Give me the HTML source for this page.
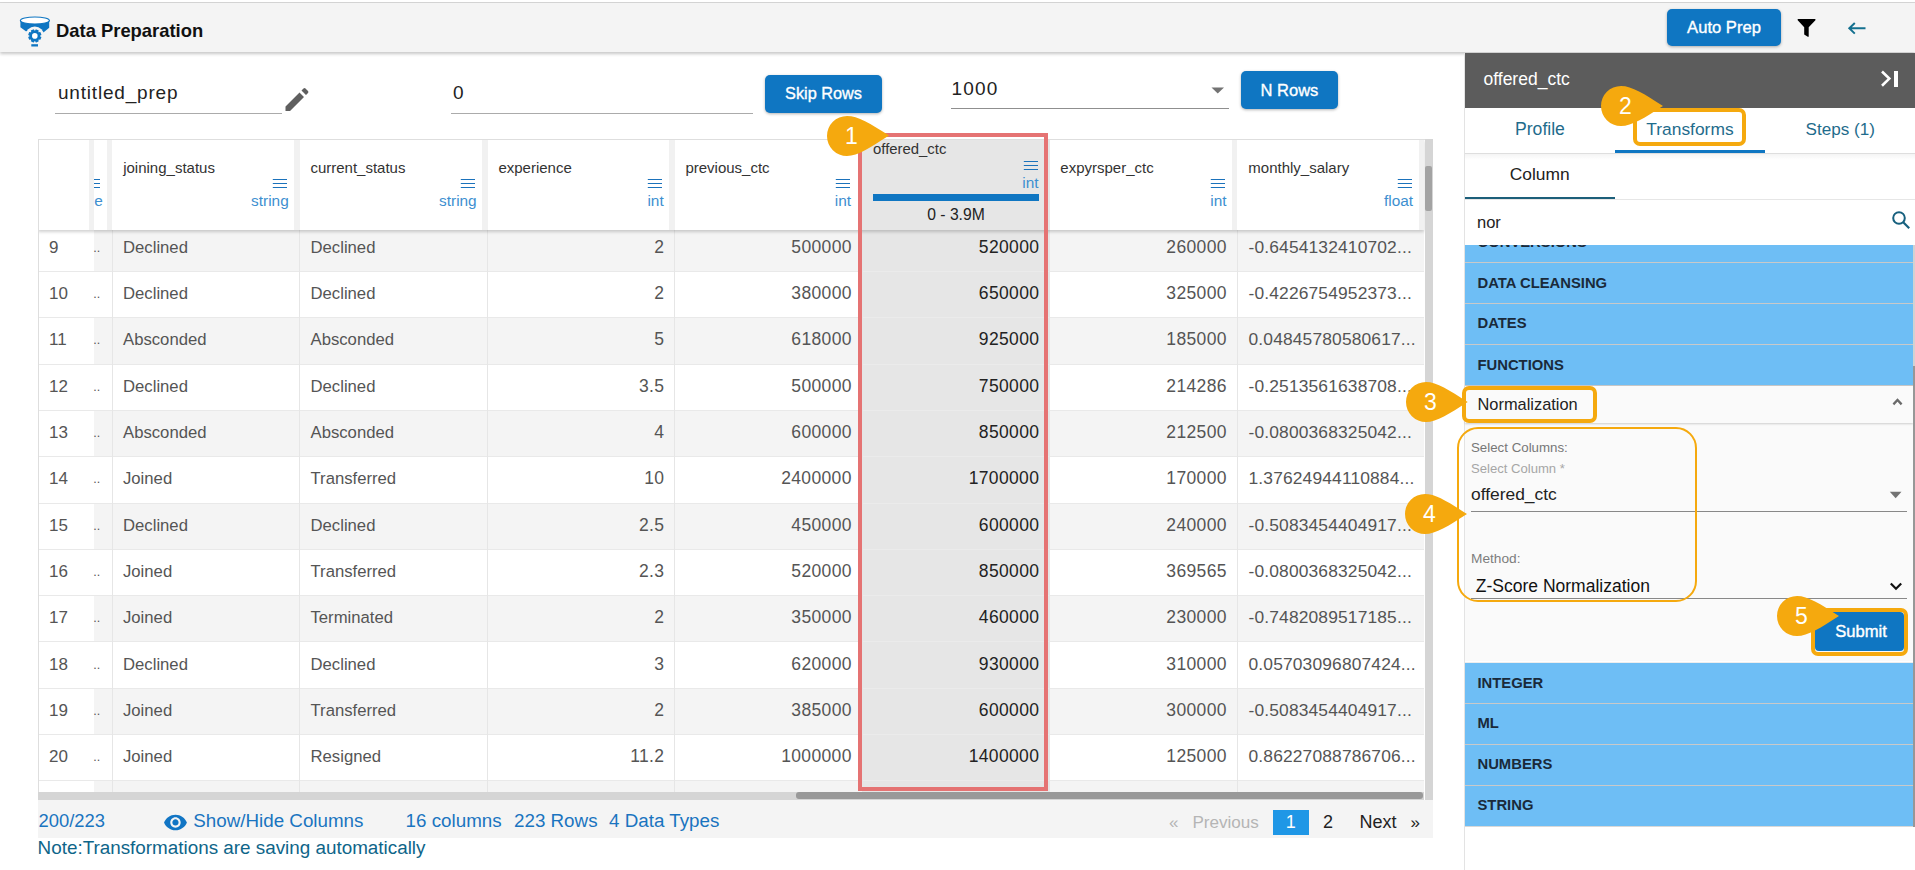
<!DOCTYPE html>
<html><head><meta charset="utf-8"><style>
html,body{margin:0;padding:0;background:#fff;width:1915px;height:870px;overflow:hidden;position:relative;font-family:"Liberation Sans", sans-serif;}
</style></head><body>
<div style="position:absolute;left:0.00px;top:0.00px;width:1915.00px;height:2.00px;background:#fff"></div><div style="position:absolute;left:0.00px;top:2.00px;width:1915.00px;height:1.00px;background:#d6d6d6"></div><div style="position:absolute;left:0.00px;top:3.00px;width:1915.00px;height:49.00px;background:#f4f4f4;box-shadow:0 2px 3px rgba(0,0,0,0.22)"></div><svg style="position:absolute;left:0.00px;top:0.00px" width="60" height="52" viewBox="0 0 60 52">
<path d="M20.4 20.5 V27.2 L25.8 31.2 L43.4 32.6 L49.2 27.8 V20.5 Z" fill="#0f76c2"/>
<circle cx="34.8" cy="35.9" r="9.4" fill="#f4f4f4"/>
<ellipse cx="34.9" cy="20.5" rx="14.5" ry="3.5" fill="#fff" stroke="#0f76c2" stroke-width="1.2"/>
<g transform="translate(34.8,35.9) rotate(22.5)" fill="#0f76c2">
<circle r="5.3"/>
<rect x="-1.7" y="-6.6" width="3.4" height="13.2" rx="0.6"/>
<rect x="-1.7" y="-6.6" width="3.4" height="13.2" rx="0.6" transform="rotate(45)"/>
<rect x="-1.7" y="-6.6" width="3.4" height="13.2" rx="0.6" transform="rotate(90)"/>
<rect x="-1.7" y="-6.6" width="3.4" height="13.2" rx="0.6" transform="rotate(135)"/>
</g>
<circle cx="34.8" cy="35.9" r="2.8" fill="#fff"/>
<rect x="31.3" y="44.2" width="6.7" height="2.3" fill="#0f76c2"/>
</svg><div style="position:absolute;left:56.00px;top:22.00px;font-size:18.4px;line-height:1;color:#111;font-weight:700;white-space:nowrap;">Data Preparation</div><div style="position:absolute;left:1667.00px;top:9.00px;width:114.00px;height:37.00px;background:#0f76c2;border-radius:5px;box-shadow:0 1px 3px rgba(0,0,0,0.3)"></div><div style="position:absolute;left:1524.00px;width:400px;text-align:center;top:20.00px;font-size:16.6px;line-height:1;color:#fff;font-weight:400;white-space:nowrap;-webkit-text-stroke:0.35px #fff">Auto Prep</div><svg style="position:absolute;left:1797.00px;top:19.00px" width="20" height="19" viewBox="0 0 20 19"><path d="M0.7 0.1 H18.4 V1.3 L11.7 8.3 V17.8 H10.8 L7.2 15.6 V8.3 L0.7 1.3 Z" fill="#000"/></svg><svg style="position:absolute;left:1846.00px;top:21.00px" width="22" height="15" viewBox="0 0 22 15"><path d="M19.5 7.3 H3.5 M8.8 2 L3.3 7.3 L8.8 12.6" fill="none" stroke="#14708f" stroke-width="2"/></svg><div style="position:absolute;left:58.00px;top:83.00px;font-size:19px;line-height:1;color:#222;font-weight:400;white-space:nowrap;letter-spacing:0.8px">untitled_prep</div><div style="position:absolute;left:55.00px;top:113.00px;width:227.00px;height:1.00px;background:#ababab"></div><svg style="position:absolute;left:284.00px;top:87.00px" width="26" height="26" viewBox="0 0 26 26"><path d="M1.5 24 V19.5 L15.5 5.5 L20 10 L6 24 Z M17.5 3.5 L19.5 1.5 Q20.5 0.6 21.5 1.5 L24 4 Q24.9 5 24 6 L22 8 Z" fill="#5f5f5f"/></svg><div style="position:absolute;left:453.00px;top:83.00px;font-size:19px;line-height:1;color:#222;font-weight:400;white-space:nowrap;">0</div><div style="position:absolute;left:451.00px;top:113.00px;width:302.00px;height:1.00px;background:#ababab"></div><div style="position:absolute;left:765.00px;top:75.00px;width:117.00px;height:38.00px;background:#0f76c2;border-radius:5px;box-shadow:0 1px 3px rgba(0,0,0,0.3)"></div><div style="position:absolute;left:623.50px;width:400px;text-align:center;top:85.00px;font-size:16.3px;line-height:1;color:#fff;font-weight:400;white-space:nowrap;-webkit-text-stroke:0.35px #fff">Skip Rows</div><div style="position:absolute;left:951.50px;top:79.00px;font-size:19px;line-height:1;color:#222;font-weight:400;white-space:nowrap;letter-spacing:1.2px">1000</div><div style="position:absolute;left:951.00px;top:108.00px;width:278.00px;height:1.00px;background:#8f8f8f"></div><svg style="position:absolute;left:1211.00px;top:87.00px" width="14" height="7" viewBox="0 0 14 7"><path d="M0.5 0.5 H13 L6.75 6.5 Z" fill="#737373"/></svg><div style="position:absolute;left:1241.00px;top:71.00px;width:97.00px;height:38.00px;background:#0f76c2;border-radius:5px;box-shadow:0 1px 3px rgba(0,0,0,0.3)"></div><div style="position:absolute;left:1089.50px;width:400px;text-align:center;top:82.00px;font-size:16.5px;line-height:1;color:#fff;font-weight:400;white-space:nowrap;-webkit-text-stroke:0.35px #fff">N Rows</div><div style="position:absolute;left:38px;top:139px;width:1394px;height:653px;overflow:hidden;background:#fff"><div style="position:absolute;left:0.00px;top:86.70px;width:1386.00px;height:46.30px;background:#f4f4f4"></div><div style="position:absolute;left:0.00px;top:86.70px;width:56.00px;height:46.30px;background:#fff"></div><div style="position:absolute;left:0.00px;top:132.00px;width:1386.00px;height:1.00px;background:#e9e9e9"></div><div style="position:absolute;left:0.00px;top:133.00px;width:1386.00px;height:46.30px;background:#fff"></div><div style="position:absolute;left:0.00px;top:133.00px;width:56.00px;height:46.30px;background:#fff"></div><div style="position:absolute;left:0.00px;top:178.30px;width:1386.00px;height:1.00px;background:#e9e9e9"></div><div style="position:absolute;left:0.00px;top:179.30px;width:1386.00px;height:46.30px;background:#f4f4f4"></div><div style="position:absolute;left:0.00px;top:179.30px;width:56.00px;height:46.30px;background:#fff"></div><div style="position:absolute;left:0.00px;top:224.60px;width:1386.00px;height:1.00px;background:#e9e9e9"></div><div style="position:absolute;left:0.00px;top:225.60px;width:1386.00px;height:46.30px;background:#fff"></div><div style="position:absolute;left:0.00px;top:225.60px;width:56.00px;height:46.30px;background:#fff"></div><div style="position:absolute;left:0.00px;top:270.90px;width:1386.00px;height:1.00px;background:#e9e9e9"></div><div style="position:absolute;left:0.00px;top:271.90px;width:1386.00px;height:46.30px;background:#f4f4f4"></div><div style="position:absolute;left:0.00px;top:271.90px;width:56.00px;height:46.30px;background:#fff"></div><div style="position:absolute;left:0.00px;top:317.20px;width:1386.00px;height:1.00px;background:#e9e9e9"></div><div style="position:absolute;left:0.00px;top:318.20px;width:1386.00px;height:46.30px;background:#fff"></div><div style="position:absolute;left:0.00px;top:318.20px;width:56.00px;height:46.30px;background:#fff"></div><div style="position:absolute;left:0.00px;top:363.50px;width:1386.00px;height:1.00px;background:#e9e9e9"></div><div style="position:absolute;left:0.00px;top:364.50px;width:1386.00px;height:46.30px;background:#f4f4f4"></div><div style="position:absolute;left:0.00px;top:364.50px;width:56.00px;height:46.30px;background:#fff"></div><div style="position:absolute;left:0.00px;top:409.80px;width:1386.00px;height:1.00px;background:#e9e9e9"></div><div style="position:absolute;left:0.00px;top:410.80px;width:1386.00px;height:46.30px;background:#fff"></div><div style="position:absolute;left:0.00px;top:410.80px;width:56.00px;height:46.30px;background:#fff"></div><div style="position:absolute;left:0.00px;top:456.10px;width:1386.00px;height:1.00px;background:#e9e9e9"></div><div style="position:absolute;left:0.00px;top:457.10px;width:1386.00px;height:46.30px;background:#f4f4f4"></div><div style="position:absolute;left:0.00px;top:457.10px;width:56.00px;height:46.30px;background:#fff"></div><div style="position:absolute;left:0.00px;top:502.40px;width:1386.00px;height:1.00px;background:#e9e9e9"></div><div style="position:absolute;left:0.00px;top:503.40px;width:1386.00px;height:46.30px;background:#fff"></div><div style="position:absolute;left:0.00px;top:503.40px;width:56.00px;height:46.30px;background:#fff"></div><div style="position:absolute;left:0.00px;top:548.70px;width:1386.00px;height:1.00px;background:#e9e9e9"></div><div style="position:absolute;left:0.00px;top:549.70px;width:1386.00px;height:46.30px;background:#f4f4f4"></div><div style="position:absolute;left:0.00px;top:549.70px;width:56.00px;height:46.30px;background:#fff"></div><div style="position:absolute;left:0.00px;top:595.00px;width:1386.00px;height:1.00px;background:#e9e9e9"></div><div style="position:absolute;left:0.00px;top:596.00px;width:1386.00px;height:46.30px;background:#fff"></div><div style="position:absolute;left:0.00px;top:596.00px;width:56.00px;height:46.30px;background:#fff"></div><div style="position:absolute;left:0.00px;top:641.30px;width:1386.00px;height:1.00px;background:#e9e9e9"></div><div style="position:absolute;left:0.00px;top:642.30px;width:1386.00px;height:46.30px;background:#f4f4f4"></div><div style="position:absolute;left:0.00px;top:642.30px;width:56.00px;height:46.30px;background:#fff"></div><div style="position:absolute;left:0.00px;top:687.60px;width:1386.00px;height:1.00px;background:#e9e9e9"></div><div style="position:absolute;left:824.00px;top:0.00px;width:187.50px;height:653.00px;background:#e6e6e6"></div><div style="position:absolute;left:824.00px;top:132.00px;width:187.50px;height:1.00px;background:#ebebeb"></div><div style="position:absolute;left:824.00px;top:178.30px;width:187.50px;height:1.00px;background:#ebebeb"></div><div style="position:absolute;left:824.00px;top:224.60px;width:187.50px;height:1.00px;background:#ebebeb"></div><div style="position:absolute;left:824.00px;top:270.90px;width:187.50px;height:1.00px;background:#ebebeb"></div><div style="position:absolute;left:824.00px;top:317.20px;width:187.50px;height:1.00px;background:#ebebeb"></div><div style="position:absolute;left:824.00px;top:363.50px;width:187.50px;height:1.00px;background:#ebebeb"></div><div style="position:absolute;left:824.00px;top:409.80px;width:187.50px;height:1.00px;background:#ebebeb"></div><div style="position:absolute;left:824.00px;top:456.10px;width:187.50px;height:1.00px;background:#ebebeb"></div><div style="position:absolute;left:824.00px;top:502.40px;width:187.50px;height:1.00px;background:#ebebeb"></div><div style="position:absolute;left:824.00px;top:548.70px;width:187.50px;height:1.00px;background:#ebebeb"></div><div style="position:absolute;left:824.00px;top:595.00px;width:187.50px;height:1.00px;background:#ebebeb"></div><div style="position:absolute;left:824.00px;top:641.30px;width:187.50px;height:1.00px;background:#ebebeb"></div><div style="position:absolute;left:824.00px;top:687.60px;width:187.50px;height:1.00px;background:#ebebeb"></div><div style="position:absolute;left:73.90px;top:91.00px;width:1.00px;height:562.00px;background:#e6e6e6"></div><div style="position:absolute;left:261.10px;top:91.00px;width:1.00px;height:562.00px;background:#e6e6e6"></div><div style="position:absolute;left:449.10px;top:91.00px;width:1.00px;height:562.00px;background:#e6e6e6"></div><div style="position:absolute;left:636.10px;top:91.00px;width:1.00px;height:562.00px;background:#e6e6e6"></div><div style="position:absolute;left:823.50px;top:91.00px;width:1.00px;height:562.00px;background:#e6e6e6"></div><div style="position:absolute;left:1011.00px;top:91.00px;width:1.00px;height:562.00px;background:#e6e6e6"></div><div style="position:absolute;left:1199.00px;top:91.00px;width:1.00px;height:562.00px;background:#e6e6e6"></div><div style="position:absolute;left:11.00px;top:100.00px;font-size:17px;line-height:1;color:#555;font-weight:400;white-space:nowrap;">9</div><div style="position:absolute;left:55.20px;top:103.00px;font-size:12.5px;line-height:1;color:#555;font-weight:400;white-space:nowrap;">..</div><div style="position:absolute;left:85.00px;top:101.00px;font-size:16.7px;line-height:1;color:#555;font-weight:400;white-space:nowrap;">Declined</div><div style="position:absolute;left:272.50px;top:101.00px;font-size:16.7px;line-height:1;color:#555;font-weight:400;white-space:nowrap;">Declined</div><div style="position:absolute;left:226.30px;width:400px;text-align:right;top:100.00px;font-size:17.5px;line-height:1;color:#555;font-weight:400;white-space:nowrap;letter-spacing:0.35px">2</div><div style="position:absolute;left:413.80px;width:400px;text-align:right;top:100.00px;font-size:17.5px;line-height:1;color:#555;font-weight:400;white-space:nowrap;letter-spacing:0.35px">500000</div><div style="position:absolute;left:601.30px;width:400px;text-align:right;top:100.00px;font-size:17.5px;line-height:1;color:#222;font-weight:400;white-space:nowrap;letter-spacing:0.35px">520000</div><div style="position:absolute;left:788.80px;width:400px;text-align:right;top:100.00px;font-size:17.5px;line-height:1;color:#555;font-weight:400;white-space:nowrap;letter-spacing:0.35px">260000</div><div style="position:absolute;left:1210.50px;top:100.00px;font-size:17.4px;line-height:1;color:#555;font-weight:400;white-space:nowrap;letter-spacing:0.15px">-0.6454132410702...</div><div style="position:absolute;left:11.00px;top:146.00px;font-size:17px;line-height:1;color:#555;font-weight:400;white-space:nowrap;">10</div><div style="position:absolute;left:55.20px;top:149.00px;font-size:12.5px;line-height:1;color:#555;font-weight:400;white-space:nowrap;">..</div><div style="position:absolute;left:85.00px;top:147.00px;font-size:16.7px;line-height:1;color:#555;font-weight:400;white-space:nowrap;">Declined</div><div style="position:absolute;left:272.50px;top:147.00px;font-size:16.7px;line-height:1;color:#555;font-weight:400;white-space:nowrap;">Declined</div><div style="position:absolute;left:226.30px;width:400px;text-align:right;top:146.00px;font-size:17.5px;line-height:1;color:#555;font-weight:400;white-space:nowrap;letter-spacing:0.35px">2</div><div style="position:absolute;left:413.80px;width:400px;text-align:right;top:146.00px;font-size:17.5px;line-height:1;color:#555;font-weight:400;white-space:nowrap;letter-spacing:0.35px">380000</div><div style="position:absolute;left:601.30px;width:400px;text-align:right;top:146.00px;font-size:17.5px;line-height:1;color:#222;font-weight:400;white-space:nowrap;letter-spacing:0.35px">650000</div><div style="position:absolute;left:788.80px;width:400px;text-align:right;top:146.00px;font-size:17.5px;line-height:1;color:#555;font-weight:400;white-space:nowrap;letter-spacing:0.35px">325000</div><div style="position:absolute;left:1210.50px;top:146.00px;font-size:17.4px;line-height:1;color:#555;font-weight:400;white-space:nowrap;letter-spacing:0.15px">-0.4226754952373...</div><div style="position:absolute;left:11.00px;top:192.00px;font-size:17px;line-height:1;color:#555;font-weight:400;white-space:nowrap;">11</div><div style="position:absolute;left:55.20px;top:195.00px;font-size:12.5px;line-height:1;color:#555;font-weight:400;white-space:nowrap;">..</div><div style="position:absolute;left:85.00px;top:193.00px;font-size:16.7px;line-height:1;color:#555;font-weight:400;white-space:nowrap;">Absconded</div><div style="position:absolute;left:272.50px;top:193.00px;font-size:16.7px;line-height:1;color:#555;font-weight:400;white-space:nowrap;">Absconded</div><div style="position:absolute;left:226.30px;width:400px;text-align:right;top:192.00px;font-size:17.5px;line-height:1;color:#555;font-weight:400;white-space:nowrap;letter-spacing:0.35px">5</div><div style="position:absolute;left:413.80px;width:400px;text-align:right;top:192.00px;font-size:17.5px;line-height:1;color:#555;font-weight:400;white-space:nowrap;letter-spacing:0.35px">618000</div><div style="position:absolute;left:601.30px;width:400px;text-align:right;top:192.00px;font-size:17.5px;line-height:1;color:#222;font-weight:400;white-space:nowrap;letter-spacing:0.35px">925000</div><div style="position:absolute;left:788.80px;width:400px;text-align:right;top:192.00px;font-size:17.5px;line-height:1;color:#555;font-weight:400;white-space:nowrap;letter-spacing:0.35px">185000</div><div style="position:absolute;left:1210.50px;top:192.00px;font-size:17.4px;line-height:1;color:#555;font-weight:400;white-space:nowrap;letter-spacing:0.15px">0.04845780580617...</div><div style="position:absolute;left:11.00px;top:239.00px;font-size:17px;line-height:1;color:#555;font-weight:400;white-space:nowrap;">12</div><div style="position:absolute;left:55.20px;top:242.00px;font-size:12.5px;line-height:1;color:#555;font-weight:400;white-space:nowrap;">..</div><div style="position:absolute;left:85.00px;top:240.00px;font-size:16.7px;line-height:1;color:#555;font-weight:400;white-space:nowrap;">Declined</div><div style="position:absolute;left:272.50px;top:240.00px;font-size:16.7px;line-height:1;color:#555;font-weight:400;white-space:nowrap;">Declined</div><div style="position:absolute;left:226.30px;width:400px;text-align:right;top:239.00px;font-size:17.5px;line-height:1;color:#555;font-weight:400;white-space:nowrap;letter-spacing:0.35px">3.5</div><div style="position:absolute;left:413.80px;width:400px;text-align:right;top:239.00px;font-size:17.5px;line-height:1;color:#555;font-weight:400;white-space:nowrap;letter-spacing:0.35px">500000</div><div style="position:absolute;left:601.30px;width:400px;text-align:right;top:239.00px;font-size:17.5px;line-height:1;color:#222;font-weight:400;white-space:nowrap;letter-spacing:0.35px">750000</div><div style="position:absolute;left:788.80px;width:400px;text-align:right;top:239.00px;font-size:17.5px;line-height:1;color:#555;font-weight:400;white-space:nowrap;letter-spacing:0.35px">214286</div><div style="position:absolute;left:1210.50px;top:239.00px;font-size:17.4px;line-height:1;color:#555;font-weight:400;white-space:nowrap;letter-spacing:0.15px">-0.2513561638708...</div><div style="position:absolute;left:11.00px;top:285.00px;font-size:17px;line-height:1;color:#555;font-weight:400;white-space:nowrap;">13</div><div style="position:absolute;left:55.20px;top:288.00px;font-size:12.5px;line-height:1;color:#555;font-weight:400;white-space:nowrap;">..</div><div style="position:absolute;left:85.00px;top:286.00px;font-size:16.7px;line-height:1;color:#555;font-weight:400;white-space:nowrap;">Absconded</div><div style="position:absolute;left:272.50px;top:286.00px;font-size:16.7px;line-height:1;color:#555;font-weight:400;white-space:nowrap;">Absconded</div><div style="position:absolute;left:226.30px;width:400px;text-align:right;top:285.00px;font-size:17.5px;line-height:1;color:#555;font-weight:400;white-space:nowrap;letter-spacing:0.35px">4</div><div style="position:absolute;left:413.80px;width:400px;text-align:right;top:285.00px;font-size:17.5px;line-height:1;color:#555;font-weight:400;white-space:nowrap;letter-spacing:0.35px">600000</div><div style="position:absolute;left:601.30px;width:400px;text-align:right;top:285.00px;font-size:17.5px;line-height:1;color:#222;font-weight:400;white-space:nowrap;letter-spacing:0.35px">850000</div><div style="position:absolute;left:788.80px;width:400px;text-align:right;top:285.00px;font-size:17.5px;line-height:1;color:#555;font-weight:400;white-space:nowrap;letter-spacing:0.35px">212500</div><div style="position:absolute;left:1210.50px;top:285.00px;font-size:17.4px;line-height:1;color:#555;font-weight:400;white-space:nowrap;letter-spacing:0.15px">-0.0800368325042...</div><div style="position:absolute;left:11.00px;top:331.00px;font-size:17px;line-height:1;color:#555;font-weight:400;white-space:nowrap;">14</div><div style="position:absolute;left:55.20px;top:334.00px;font-size:12.5px;line-height:1;color:#555;font-weight:400;white-space:nowrap;">..</div><div style="position:absolute;left:85.00px;top:332.00px;font-size:16.7px;line-height:1;color:#555;font-weight:400;white-space:nowrap;">Joined</div><div style="position:absolute;left:272.50px;top:332.00px;font-size:16.7px;line-height:1;color:#555;font-weight:400;white-space:nowrap;">Transferred</div><div style="position:absolute;left:226.30px;width:400px;text-align:right;top:331.00px;font-size:17.5px;line-height:1;color:#555;font-weight:400;white-space:nowrap;letter-spacing:0.35px">10</div><div style="position:absolute;left:413.80px;width:400px;text-align:right;top:331.00px;font-size:17.5px;line-height:1;color:#555;font-weight:400;white-space:nowrap;letter-spacing:0.35px">2400000</div><div style="position:absolute;left:601.30px;width:400px;text-align:right;top:331.00px;font-size:17.5px;line-height:1;color:#222;font-weight:400;white-space:nowrap;letter-spacing:0.35px">1700000</div><div style="position:absolute;left:788.80px;width:400px;text-align:right;top:331.00px;font-size:17.5px;line-height:1;color:#555;font-weight:400;white-space:nowrap;letter-spacing:0.35px">170000</div><div style="position:absolute;left:1210.50px;top:331.00px;font-size:17.4px;line-height:1;color:#555;font-weight:400;white-space:nowrap;letter-spacing:0.15px">1.37624944110884...</div><div style="position:absolute;left:11.00px;top:378.00px;font-size:17px;line-height:1;color:#555;font-weight:400;white-space:nowrap;">15</div><div style="position:absolute;left:55.20px;top:381.00px;font-size:12.5px;line-height:1;color:#555;font-weight:400;white-space:nowrap;">..</div><div style="position:absolute;left:85.00px;top:379.00px;font-size:16.7px;line-height:1;color:#555;font-weight:400;white-space:nowrap;">Declined</div><div style="position:absolute;left:272.50px;top:379.00px;font-size:16.7px;line-height:1;color:#555;font-weight:400;white-space:nowrap;">Declined</div><div style="position:absolute;left:226.30px;width:400px;text-align:right;top:378.00px;font-size:17.5px;line-height:1;color:#555;font-weight:400;white-space:nowrap;letter-spacing:0.35px">2.5</div><div style="position:absolute;left:413.80px;width:400px;text-align:right;top:378.00px;font-size:17.5px;line-height:1;color:#555;font-weight:400;white-space:nowrap;letter-spacing:0.35px">450000</div><div style="position:absolute;left:601.30px;width:400px;text-align:right;top:378.00px;font-size:17.5px;line-height:1;color:#222;font-weight:400;white-space:nowrap;letter-spacing:0.35px">600000</div><div style="position:absolute;left:788.80px;width:400px;text-align:right;top:378.00px;font-size:17.5px;line-height:1;color:#555;font-weight:400;white-space:nowrap;letter-spacing:0.35px">240000</div><div style="position:absolute;left:1210.50px;top:378.00px;font-size:17.4px;line-height:1;color:#555;font-weight:400;white-space:nowrap;letter-spacing:0.15px">-0.5083454404917...</div><div style="position:absolute;left:11.00px;top:424.00px;font-size:17px;line-height:1;color:#555;font-weight:400;white-space:nowrap;">16</div><div style="position:absolute;left:55.20px;top:427.00px;font-size:12.5px;line-height:1;color:#555;font-weight:400;white-space:nowrap;">..</div><div style="position:absolute;left:85.00px;top:425.00px;font-size:16.7px;line-height:1;color:#555;font-weight:400;white-space:nowrap;">Joined</div><div style="position:absolute;left:272.50px;top:425.00px;font-size:16.7px;line-height:1;color:#555;font-weight:400;white-space:nowrap;">Transferred</div><div style="position:absolute;left:226.30px;width:400px;text-align:right;top:424.00px;font-size:17.5px;line-height:1;color:#555;font-weight:400;white-space:nowrap;letter-spacing:0.35px">2.3</div><div style="position:absolute;left:413.80px;width:400px;text-align:right;top:424.00px;font-size:17.5px;line-height:1;color:#555;font-weight:400;white-space:nowrap;letter-spacing:0.35px">520000</div><div style="position:absolute;left:601.30px;width:400px;text-align:right;top:424.00px;font-size:17.5px;line-height:1;color:#222;font-weight:400;white-space:nowrap;letter-spacing:0.35px">850000</div><div style="position:absolute;left:788.80px;width:400px;text-align:right;top:424.00px;font-size:17.5px;line-height:1;color:#555;font-weight:400;white-space:nowrap;letter-spacing:0.35px">369565</div><div style="position:absolute;left:1210.50px;top:424.00px;font-size:17.4px;line-height:1;color:#555;font-weight:400;white-space:nowrap;letter-spacing:0.15px">-0.0800368325042...</div><div style="position:absolute;left:11.00px;top:470.00px;font-size:17px;line-height:1;color:#555;font-weight:400;white-space:nowrap;">17</div><div style="position:absolute;left:55.20px;top:473.00px;font-size:12.5px;line-height:1;color:#555;font-weight:400;white-space:nowrap;">..</div><div style="position:absolute;left:85.00px;top:471.00px;font-size:16.7px;line-height:1;color:#555;font-weight:400;white-space:nowrap;">Joined</div><div style="position:absolute;left:272.50px;top:471.00px;font-size:16.7px;line-height:1;color:#555;font-weight:400;white-space:nowrap;">Terminated</div><div style="position:absolute;left:226.30px;width:400px;text-align:right;top:470.00px;font-size:17.5px;line-height:1;color:#555;font-weight:400;white-space:nowrap;letter-spacing:0.35px">2</div><div style="position:absolute;left:413.80px;width:400px;text-align:right;top:470.00px;font-size:17.5px;line-height:1;color:#555;font-weight:400;white-space:nowrap;letter-spacing:0.35px">350000</div><div style="position:absolute;left:601.30px;width:400px;text-align:right;top:470.00px;font-size:17.5px;line-height:1;color:#222;font-weight:400;white-space:nowrap;letter-spacing:0.35px">460000</div><div style="position:absolute;left:788.80px;width:400px;text-align:right;top:470.00px;font-size:17.5px;line-height:1;color:#555;font-weight:400;white-space:nowrap;letter-spacing:0.35px">230000</div><div style="position:absolute;left:1210.50px;top:470.00px;font-size:17.4px;line-height:1;color:#555;font-weight:400;white-space:nowrap;letter-spacing:0.15px">-0.7482089517185...</div><div style="position:absolute;left:11.00px;top:517.00px;font-size:17px;line-height:1;color:#555;font-weight:400;white-space:nowrap;">18</div><div style="position:absolute;left:55.20px;top:520.00px;font-size:12.5px;line-height:1;color:#555;font-weight:400;white-space:nowrap;">..</div><div style="position:absolute;left:85.00px;top:518.00px;font-size:16.7px;line-height:1;color:#555;font-weight:400;white-space:nowrap;">Declined</div><div style="position:absolute;left:272.50px;top:518.00px;font-size:16.7px;line-height:1;color:#555;font-weight:400;white-space:nowrap;">Declined</div><div style="position:absolute;left:226.30px;width:400px;text-align:right;top:517.00px;font-size:17.5px;line-height:1;color:#555;font-weight:400;white-space:nowrap;letter-spacing:0.35px">3</div><div style="position:absolute;left:413.80px;width:400px;text-align:right;top:517.00px;font-size:17.5px;line-height:1;color:#555;font-weight:400;white-space:nowrap;letter-spacing:0.35px">620000</div><div style="position:absolute;left:601.30px;width:400px;text-align:right;top:517.00px;font-size:17.5px;line-height:1;color:#222;font-weight:400;white-space:nowrap;letter-spacing:0.35px">930000</div><div style="position:absolute;left:788.80px;width:400px;text-align:right;top:517.00px;font-size:17.5px;line-height:1;color:#555;font-weight:400;white-space:nowrap;letter-spacing:0.35px">310000</div><div style="position:absolute;left:1210.50px;top:517.00px;font-size:17.4px;line-height:1;color:#555;font-weight:400;white-space:nowrap;letter-spacing:0.15px">0.05703096807424...</div><div style="position:absolute;left:11.00px;top:563.00px;font-size:17px;line-height:1;color:#555;font-weight:400;white-space:nowrap;">19</div><div style="position:absolute;left:55.20px;top:566.00px;font-size:12.5px;line-height:1;color:#555;font-weight:400;white-space:nowrap;">..</div><div style="position:absolute;left:85.00px;top:564.00px;font-size:16.7px;line-height:1;color:#555;font-weight:400;white-space:nowrap;">Joined</div><div style="position:absolute;left:272.50px;top:564.00px;font-size:16.7px;line-height:1;color:#555;font-weight:400;white-space:nowrap;">Transferred</div><div style="position:absolute;left:226.30px;width:400px;text-align:right;top:563.00px;font-size:17.5px;line-height:1;color:#555;font-weight:400;white-space:nowrap;letter-spacing:0.35px">2</div><div style="position:absolute;left:413.80px;width:400px;text-align:right;top:563.00px;font-size:17.5px;line-height:1;color:#555;font-weight:400;white-space:nowrap;letter-spacing:0.35px">385000</div><div style="position:absolute;left:601.30px;width:400px;text-align:right;top:563.00px;font-size:17.5px;line-height:1;color:#222;font-weight:400;white-space:nowrap;letter-spacing:0.35px">600000</div><div style="position:absolute;left:788.80px;width:400px;text-align:right;top:563.00px;font-size:17.5px;line-height:1;color:#555;font-weight:400;white-space:nowrap;letter-spacing:0.35px">300000</div><div style="position:absolute;left:1210.50px;top:563.00px;font-size:17.4px;line-height:1;color:#555;font-weight:400;white-space:nowrap;letter-spacing:0.15px">-0.5083454404917...</div><div style="position:absolute;left:11.00px;top:609.00px;font-size:17px;line-height:1;color:#555;font-weight:400;white-space:nowrap;">20</div><div style="position:absolute;left:55.20px;top:612.00px;font-size:12.5px;line-height:1;color:#555;font-weight:400;white-space:nowrap;">..</div><div style="position:absolute;left:85.00px;top:610.00px;font-size:16.7px;line-height:1;color:#555;font-weight:400;white-space:nowrap;">Joined</div><div style="position:absolute;left:272.50px;top:610.00px;font-size:16.7px;line-height:1;color:#555;font-weight:400;white-space:nowrap;">Resigned</div><div style="position:absolute;left:226.30px;width:400px;text-align:right;top:609.00px;font-size:17.5px;line-height:1;color:#555;font-weight:400;white-space:nowrap;letter-spacing:0.35px">11.2</div><div style="position:absolute;left:413.80px;width:400px;text-align:right;top:609.00px;font-size:17.5px;line-height:1;color:#555;font-weight:400;white-space:nowrap;letter-spacing:0.35px">1000000</div><div style="position:absolute;left:601.30px;width:400px;text-align:right;top:609.00px;font-size:17.5px;line-height:1;color:#222;font-weight:400;white-space:nowrap;letter-spacing:0.35px">1400000</div><div style="position:absolute;left:788.80px;width:400px;text-align:right;top:609.00px;font-size:17.5px;line-height:1;color:#555;font-weight:400;white-space:nowrap;letter-spacing:0.35px">125000</div><div style="position:absolute;left:1210.50px;top:609.00px;font-size:17.4px;line-height:1;color:#555;font-weight:400;white-space:nowrap;letter-spacing:0.15px">0.86227088786706...</div><div style="position:absolute;left:0.00px;top:0.00px;width:1386.00px;height:91.00px;background:#fff;box-shadow:0 2px 3px rgba(0,0,0,0.18)"></div><div style="position:absolute;left:824.00px;top:0.00px;width:187.50px;height:91.00px;background:#e6e6e6"></div><div style="position:absolute;left:51.00px;top:0.00px;width:5.00px;height:91.00px;background:#f1f1f1"></div><div style="position:absolute;left:69.00px;top:0.00px;width:5.40px;height:91.00px;background:#f1f1f1"></div><div style="position:absolute;left:256.20px;top:0.00px;width:5.40px;height:91.00px;background:#f1f1f1"></div><div style="position:absolute;left:444.20px;top:0.00px;width:5.40px;height:91.00px;background:#f1f1f1"></div><div style="position:absolute;left:631.20px;top:0.00px;width:5.40px;height:91.00px;background:#f1f1f1"></div><div style="position:absolute;left:1194.20px;top:0.00px;width:5.30px;height:91.00px;background:#f1f1f1"></div><div style="position:absolute;left:1381.00px;top:0.00px;width:5.00px;height:91.00px;background:#f1f1f1"></div><div style="position:absolute;left:56px;top:0;width:13px;height:91px;overflow:hidden"><svg style="position:absolute;left:0px;top:40.00px" width="15" height="10" viewBox="0 0 15 10"><path d="M-10 0.5H6M-10 4.5H6M-10 8.5H6" stroke="#1b72bb" stroke-width="1.1"/></svg><div style="position:absolute;left:0.2px;top:54.00px;font-size:15.4px;line-height:1;color:#3d8fd0;white-space:nowrap">e</div></div><div style="position:absolute;left:85.20px;top:21.00px;font-size:15px;line-height:1;color:#333;font-weight:400;white-space:nowrap;">joining_status</div><svg style="position:absolute;left:234.20px;top:40.00px" width="15" height="10" viewBox="0 0 15 10"><path d="M0.8 0.5H15M0.8 4.5H15M0.8 8.5H15" stroke="#1b72bb" stroke-width="1.1"/></svg><div style="position:absolute;left:-149.30px;width:400px;text-align:right;top:54.00px;font-size:15.4px;line-height:1;color:#3d8fd0;font-weight:400;white-space:nowrap;">string</div><div style="position:absolute;left:272.40px;top:21.00px;font-size:15px;line-height:1;color:#333;font-weight:400;white-space:nowrap;">current_status</div><svg style="position:absolute;left:422.20px;top:40.00px" width="15" height="10" viewBox="0 0 15 10"><path d="M0.8 0.5H15M0.8 4.5H15M0.8 8.5H15" stroke="#1b72bb" stroke-width="1.1"/></svg><div style="position:absolute;left:38.70px;width:400px;text-align:right;top:54.00px;font-size:15.4px;line-height:1;color:#3d8fd0;font-weight:400;white-space:nowrap;">string</div><div style="position:absolute;left:460.40px;top:21.00px;font-size:15px;line-height:1;color:#333;font-weight:400;white-space:nowrap;">experience</div><svg style="position:absolute;left:609.20px;top:40.00px" width="15" height="10" viewBox="0 0 15 10"><path d="M0.8 0.5H15M0.8 4.5H15M0.8 8.5H15" stroke="#1b72bb" stroke-width="1.1"/></svg><div style="position:absolute;left:225.70px;width:400px;text-align:right;top:54.00px;font-size:15.4px;line-height:1;color:#3d8fd0;font-weight:400;white-space:nowrap;">int</div><div style="position:absolute;left:647.40px;top:21.00px;font-size:15px;line-height:1;color:#333;font-weight:400;white-space:nowrap;">previous_ctc</div><svg style="position:absolute;left:796.60px;top:40.00px" width="15" height="10" viewBox="0 0 15 10"><path d="M0.8 0.5H15M0.8 4.5H15M0.8 8.5H15" stroke="#1b72bb" stroke-width="1.1"/></svg><div style="position:absolute;left:413.10px;width:400px;text-align:right;top:54.00px;font-size:15.4px;line-height:1;color:#3d8fd0;font-weight:400;white-space:nowrap;">int</div><div style="position:absolute;left:835.00px;top:3.00px;font-size:14.9px;line-height:1;color:#333;font-weight:400;white-space:nowrap;">offered_ctc</div><svg style="position:absolute;left:984.50px;top:22.00px" width="15" height="10" viewBox="0 0 15 10"><path d="M0.8 0.5H15M0.8 4.5H15M0.8 8.5H15" stroke="#1b72bb" stroke-width="1.1"/></svg><div style="position:absolute;left:600.50px;width:400px;text-align:right;top:36.00px;font-size:15.4px;line-height:1;color:#3d8fd0;font-weight:400;white-space:nowrap;">int</div><div style="position:absolute;left:835.00px;top:55.20px;width:166.00px;height:6.40px;background:#0f76c2"></div><div style="position:absolute;left:835px;width:166px;text-align:center;top:68.00px;font-size:15.7px;line-height:1;color:#222;white-space:nowrap">0 - 3.9M</div><div style="position:absolute;left:1022.30px;top:21.00px;font-size:15px;line-height:1;color:#333;font-weight:400;white-space:nowrap;">expyrsper_ctc</div><svg style="position:absolute;left:1172.10px;top:40.00px" width="15" height="10" viewBox="0 0 15 10"><path d="M0.8 0.5H15M0.8 4.5H15M0.8 8.5H15" stroke="#1b72bb" stroke-width="1.1"/></svg><div style="position:absolute;left:788.60px;width:400px;text-align:right;top:54.00px;font-size:15.4px;line-height:1;color:#3d8fd0;font-weight:400;white-space:nowrap;">int</div><div style="position:absolute;left:1210.30px;top:21.00px;font-size:15px;line-height:1;color:#333;font-weight:400;white-space:nowrap;">monthly_salary</div><svg style="position:absolute;left:1358.60px;top:40.00px" width="15" height="10" viewBox="0 0 15 10"><path d="M0.8 0.5H15M0.8 4.5H15M0.8 8.5H15" stroke="#1b72bb" stroke-width="1.1"/></svg><div style="position:absolute;left:975.10px;width:400px;text-align:right;top:54.00px;font-size:15.4px;line-height:1;color:#3d8fd0;font-weight:400;white-space:nowrap;">float</div></div><div style="position:absolute;left:38.00px;top:139.00px;width:1.00px;height:653.00px;background:#dedede"></div><div style="position:absolute;left:38.00px;top:139.00px;width:1394.00px;height:1.00px;background:#dedede"></div><div style="position:absolute;left:1425.00px;top:139.00px;width:7.80px;height:661.00px;background:#d5d5d5"></div><div style="position:absolute;left:1425.00px;top:166.00px;width:6.70px;height:45.00px;background:#a3a3a3;border-radius:2px"></div><div style="position:absolute;left:38.00px;top:792.00px;width:1386.00px;height:8.00px;background:#d5d5d5"></div><div style="position:absolute;left:795.80px;top:792.30px;width:627.70px;height:6.70px;background:#999;border-radius:3px"></div><div style="position:absolute;left:858.00px;top:133.40px;width:190.00px;height:657.20px;border:4px solid #e57373;box-sizing:border-box"></div><div style="position:absolute;left:38.00px;top:800.00px;width:1394.60px;height:37.80px;background:#f4f4f4"></div><div style="position:absolute;left:38.50px;top:812.00px;font-size:18.4px;line-height:1;color:#1a74c0;font-weight:400;white-space:nowrap;">200/223</div><svg style="position:absolute;left:163.06px;top:809.97px" width="24.96" height="24.96" viewBox="0 0 24 24"><path fill="#1175c4" fill-rule="evenodd" d="M12 4.5C7 4.5 2.73 7.61 1 12c1.73 4.39 6 7.5 11 7.5s9.27-3.11 11-7.5c-1.73-4.39-6-7.5-11-7.5zM12 17c-2.76 0-5-2.24-5-5s2.24-5 5-5 5 2.24 5 5-2.24 5-5 5zm0-8c-1.66 0-3 1.34-3 3s1.34 3 3 3 3-1.34 3-3-1.34-3-3-3z"/></svg><div style="position:absolute;left:193.30px;top:812.00px;font-size:18.8px;line-height:1;color:#1a74c0;font-weight:400;white-space:nowrap;">Show/Hide Columns</div><div style="position:absolute;left:405.60px;top:812.00px;font-size:18.8px;line-height:1;color:#1a74c0;font-weight:400;white-space:nowrap;">16 columns</div><div style="position:absolute;left:514.00px;top:812.00px;font-size:18.8px;line-height:1;color:#1a74c0;font-weight:400;white-space:nowrap;">223 Rows</div><div style="position:absolute;left:609.00px;top:812.00px;font-size:18.8px;line-height:1;color:#1a74c0;font-weight:400;white-space:nowrap;">4 Data Types</div><div style="position:absolute;left:37.60px;top:839.00px;font-size:18.85px;line-height:1;color:#0e6589;font-weight:400;white-space:nowrap;">Note:Transformations are saving automatically</div><div style="position:absolute;left:1169.00px;top:814.00px;font-size:17px;line-height:1;color:#b5b5b5;font-weight:400;white-space:nowrap;">&laquo;</div><div style="position:absolute;left:1192.40px;top:814.00px;font-size:17.1px;line-height:1;color:#b5b5b5;font-weight:400;white-space:nowrap;">Previous</div><div style="position:absolute;left:1273.00px;top:810.00px;width:35.70px;height:25.00px;background:#1f97e6"></div><div style="position:absolute;left:1090.85px;width:400px;text-align:center;top:813.00px;font-size:18px;line-height:1;color:#fff;font-weight:400;white-space:nowrap;">1</div><div style="position:absolute;left:1128.00px;width:400px;text-align:center;top:813.00px;font-size:18px;line-height:1;color:#222;font-weight:400;white-space:nowrap;">2</div><div style="position:absolute;left:1359.50px;top:813.00px;font-size:18px;line-height:1;color:#222;font-weight:400;white-space:nowrap;">Next</div><div style="position:absolute;left:1410.50px;top:814.00px;font-size:17px;line-height:1;color:#222;font-weight:400;white-space:nowrap;">&raquo;</div><div style="position:absolute;left:1464.00px;top:53.00px;width:451.00px;height:817.00px;background:#fff"></div><div style="position:absolute;left:1464.00px;top:53.00px;width:1.00px;height:817.00px;background:#e3e3e3"></div><div style="position:absolute;left:1465.00px;top:53.00px;width:450.00px;height:54.60px;background:#5c5c5c"></div><div style="position:absolute;left:1483.50px;top:71.00px;font-size:17.5px;line-height:1;color:#fff;font-weight:400;white-space:nowrap;">offered_ctc</div><svg style="position:absolute;left:1880.00px;top:70.00px" width="20" height="18" viewBox="0 0 20 18"><path d="M2 1.5 L9.3 8.6 L2 15.7" fill="none" stroke="#fff" stroke-width="2.6"/><rect x="14" y="1" width="4" height="16" fill="#fff"/></svg><div style="position:absolute;left:1465.00px;top:107.60px;width:450.00px;height:45.40px;background:#fff"></div><div style="position:absolute;left:1515.00px;top:121.00px;font-size:17.6px;line-height:1;color:#1f6c8c;font-weight:400;white-space:nowrap;">Profile</div><div style="position:absolute;left:1646.30px;top:121.00px;font-size:17.4px;line-height:1;color:#1f6c8c;font-weight:400;white-space:nowrap;">Transforms</div><div style="position:absolute;left:1805.50px;top:121.00px;font-size:17.1px;line-height:1;color:#1f6c8c;font-weight:400;white-space:nowrap;">Steps (1)</div><div style="position:absolute;left:1465.00px;top:152.50px;width:450.00px;height:1.00px;background:#dedede"></div><div style="position:absolute;left:1615.00px;top:150.00px;width:150.00px;height:3.00px;background:#0f76c2"></div><div style="position:absolute;left:1465.00px;top:153.50px;width:450.00px;height:45.50px;background:#fff"></div><div style="position:absolute;left:1465.00px;top:153.50px;width:450.00px;height:6.50px;background:linear-gradient(rgba(0,0,0,0.045),rgba(0,0,0,0))"></div><div style="position:absolute;left:1509.70px;top:166.00px;font-size:17.4px;line-height:1;color:#222;font-weight:400;white-space:nowrap;">Column</div><div style="position:absolute;left:1465.00px;top:196.70px;width:150.00px;height:2.30px;background:#1c5f7a"></div><div style="position:absolute;left:1465.00px;top:199.00px;width:450.00px;height:1.00px;background:#e6e6e6"></div><div style="position:absolute;left:1477.00px;top:214.00px;font-size:16.5px;line-height:1;color:#222;font-weight:400;white-space:nowrap;">nor</div><svg style="position:absolute;left:1890.00px;top:209.00px" width="22" height="22" viewBox="0 0 22 22"><circle cx="9" cy="9" r="5.8" fill="none" stroke="#17607e" stroke-width="2"/><path d="M13 13 L19.2 19.2" stroke="#17607e" stroke-width="2.2"/></svg><div style="position:absolute;left:0;top:244.8px;width:1915px;height:630px;overflow:hidden"></div><div style="position:absolute;left:1465px;top:244.8px;width:448px;height:17.5px;overflow:hidden;background:#6ebef5"><div style="position:absolute;left:12.5px;top:-9.80px;font-size:14.8px;line-height:1;font-weight:700;color:#1a2a3a;white-space:nowrap">CONVERSIONS</div></div><div style="position:absolute;left:1465.00px;top:262.30px;width:448.00px;height:1.00px;background:#c9c9c9"></div><div style="position:absolute;left:1465.00px;top:262.30px;width:448.00px;height:40.90px;background:#6ebef5"></div><div style="position:absolute;left:1465.00px;top:262.30px;width:448.00px;height:1.00px;background:#c9c9c9"></div><div style="position:absolute;left:1477.50px;top:276.00px;font-size:14.8px;line-height:1;color:#1a2a3a;font-weight:700;white-space:nowrap;">DATA CLEANSING</div><div style="position:absolute;left:1465.00px;top:303.20px;width:448.00px;height:41.10px;background:#6ebef5"></div><div style="position:absolute;left:1465.00px;top:303.20px;width:448.00px;height:1.00px;background:#c9c9c9"></div><div style="position:absolute;left:1477.50px;top:316.00px;font-size:14.8px;line-height:1;color:#1a2a3a;font-weight:700;white-space:nowrap;">DATES</div><div style="position:absolute;left:1465.00px;top:344.30px;width:448.00px;height:41.00px;background:#6ebef5"></div><div style="position:absolute;left:1465.00px;top:344.30px;width:448.00px;height:1.00px;background:#c9c9c9"></div><div style="position:absolute;left:1477.50px;top:358.00px;font-size:14.8px;line-height:1;color:#1a2a3a;font-weight:700;white-space:nowrap;">FUNCTIONS</div><div style="position:absolute;left:1465.00px;top:385.30px;width:448.00px;height:1.00px;background:#c9c9c9"></div><div style="position:absolute;left:1465.00px;top:386.30px;width:448.00px;height:275.20px;background:#fafafa"></div><div style="position:absolute;left:1465.00px;top:386.30px;width:448.00px;height:36.70px;background:#fafafa;box-shadow:0 1px 2px rgba(0,0,0,0.18)"></div><div style="position:absolute;left:1477.50px;top:396.00px;font-size:16.4px;line-height:1;color:#222;font-weight:400;white-space:nowrap;">Normalization</div><svg style="position:absolute;left:1891.00px;top:397.00px" width="13" height="10" viewBox="0 0 13 10"><path d="M2.4 7.4 L6.5 3 L10.6 7.4" fill="none" stroke="#6a6a6a" stroke-width="2.3"/></svg><div style="position:absolute;left:1471.00px;top:441.00px;font-size:13.3px;line-height:1;color:#777;font-weight:400;white-space:nowrap;">Select Columns:</div><div style="position:absolute;left:1471.00px;top:462.00px;font-size:13.1px;line-height:1;color:#a6a6a6;font-weight:400;white-space:nowrap;">Select Column *</div><div style="position:absolute;left:1471.00px;top:486.00px;font-size:17.4px;line-height:1;color:#222;font-weight:400;white-space:nowrap;">offered_ctc</div><svg style="position:absolute;left:1889.00px;top:491.00px" width="14" height="8" viewBox="0 0 14 8"><path d="M0.8 0.8 H12.5 L6.65 7.2 Z" fill="#737373"/></svg><div style="position:absolute;left:1471.00px;top:510.50px;width:436.00px;height:1.00px;background:#888"></div><div style="position:absolute;left:1471.00px;top:552.00px;font-size:13.7px;line-height:1;color:#7d7d7d;font-weight:400;white-space:nowrap;">Method:</div><div style="position:absolute;left:1475.80px;top:578.00px;font-size:17.5px;line-height:1;color:#111;font-weight:400;white-space:nowrap;">Z-Score Normalization</div><svg style="position:absolute;left:1889.00px;top:581.00px" width="14" height="11" viewBox="0 0 14 11"><path d="M1.8 2.5 L7 7.8 L12.2 2.5" fill="none" stroke="#111" stroke-width="2.2"/></svg><div style="position:absolute;left:1471.00px;top:597.50px;width:436.00px;height:1.00px;background:#888"></div><div style="position:absolute;left:1815.00px;top:612.00px;width:89.00px;height:39.00px;background:#0f76c2;border-radius:4px"></div><div style="position:absolute;left:1661.00px;width:400px;text-align:center;top:624.00px;font-size:16.6px;line-height:1;color:#fff;font-weight:400;white-space:nowrap;-webkit-text-stroke:0.4px #fff">Submit</div><div style="position:absolute;left:1465.00px;top:661.50px;width:448.00px;height:1.40px;background:linear-gradient(#e8e8e8,#f4f4f4)"></div><div style="position:absolute;left:1465.00px;top:662.90px;width:448.00px;height:39.90px;background:#6ebef5"></div><div style="position:absolute;left:1477.50px;top:676.00px;font-size:14.8px;line-height:1;color:#1a2a3a;font-weight:700;white-space:nowrap;">INTEGER</div><div style="position:absolute;left:1465.00px;top:702.80px;width:448.00px;height:41.10px;background:#6ebef5"></div><div style="position:absolute;left:1465.00px;top:702.80px;width:448.00px;height:1.00px;background:#c9c9c9"></div><div style="position:absolute;left:1477.50px;top:716.00px;font-size:14.8px;line-height:1;color:#1a2a3a;font-weight:700;white-space:nowrap;">ML</div><div style="position:absolute;left:1465.00px;top:743.90px;width:448.00px;height:40.90px;background:#6ebef5"></div><div style="position:absolute;left:1465.00px;top:743.90px;width:448.00px;height:1.00px;background:#c9c9c9"></div><div style="position:absolute;left:1477.50px;top:757.00px;font-size:14.8px;line-height:1;color:#1a2a3a;font-weight:700;white-space:nowrap;">NUMBERS</div><div style="position:absolute;left:1465.00px;top:784.80px;width:448.00px;height:40.80px;background:#6ebef5"></div><div style="position:absolute;left:1465.00px;top:784.80px;width:448.00px;height:1.00px;background:#c9c9c9"></div><div style="position:absolute;left:1477.50px;top:798.00px;font-size:14.8px;line-height:1;color:#1a2a3a;font-weight:700;white-space:nowrap;">STRING</div><div style="position:absolute;left:1465.00px;top:825.60px;width:448.00px;height:1.00px;background:#d8d8d8"></div><div style="position:absolute;left:1913.00px;top:245.00px;width:2.00px;height:121.00px;background:#d2d2d2"></div><div style="position:absolute;left:1913.00px;top:366.00px;width:2.00px;height:461.00px;background:#979797"></div><div style="position:absolute;left:1633.00px;top:108.00px;width:113.00px;height:38.00px;border:4px solid #f5a90e;border-radius:7px;box-sizing:border-box"></div><div style="position:absolute;left:1462.00px;top:386.00px;width:135.00px;height:37.00px;border:4px solid #f5a90e;border-radius:7px;box-sizing:border-box"></div><div style="position:absolute;left:1457.00px;top:426.70px;width:240.00px;height:175.80px;border:2.6px solid #f5a90e;border-radius:21px;box-sizing:border-box"></div><div style="position:absolute;left:1811.00px;top:608.00px;width:97.00px;height:48.00px;border:4px solid #f5a90e;border-radius:7px;box-sizing:border-box"></div><svg style="position:absolute;left:824.80px;top:114.00px;overflow:visible" width="67.10" height="44.00"><path d="M22.00 2.00 C33.00 2.00 45.15 9.48 64.10 21.60 C45.15 33.72 33.00 42.00 22.00 42.00 A20 20 0 0 1 22.00 2.00 Z" fill="#f5a90e"/></svg><div style="position:absolute;left:651.30px;width:400px;text-align:center;top:125.00px;font-size:23px;line-height:1;color:#fff;font-weight:400;white-space:nowrap;">1</div><svg style="position:absolute;left:1599.00px;top:84.00px;overflow:visible" width="67.00" height="44.00"><path d="M22.00 2.00 C33.00 2.00 45.10 9.90 64.00 22.00 C45.10 34.10 33.00 42.00 22.00 42.00 A20 20 0 0 1 22.00 2.00 Z" fill="#f5a90e"/></svg><div style="position:absolute;left:1425.50px;width:400px;text-align:center;top:95.00px;font-size:23px;line-height:1;color:#fff;font-weight:400;white-space:nowrap;">2</div><svg style="position:absolute;left:1404.00px;top:380.00px;overflow:visible" width="66.70" height="44.00"><path d="M22.00 2.00 C33.00 2.00 44.93 9.99 63.70 22.00 C44.93 34.01 33.00 42.00 22.00 42.00 A20 20 0 0 1 22.00 2.00 Z" fill="#f5a90e"/></svg><div style="position:absolute;left:1230.50px;width:400px;text-align:center;top:391.00px;font-size:23px;line-height:1;color:#fff;font-weight:400;white-space:nowrap;">3</div><svg style="position:absolute;left:1403.00px;top:492.00px;overflow:visible" width="67.00" height="44.00"><path d="M22.00 2.00 C33.00 2.00 45.10 9.90 64.00 22.00 C45.10 34.10 33.00 42.00 22.00 42.00 A20 20 0 0 1 22.00 2.00 Z" fill="#f5a90e"/></svg><div style="position:absolute;left:1229.50px;width:400px;text-align:center;top:503.00px;font-size:23px;line-height:1;color:#fff;font-weight:400;white-space:nowrap;">4</div><svg style="position:absolute;left:1775.00px;top:594.00px;overflow:visible" width="67.00" height="44.00"><path d="M22.00 2.00 C33.00 2.00 45.10 9.90 64.00 22.00 C45.10 34.10 33.00 42.00 22.00 42.00 A20 20 0 0 1 22.00 2.00 Z" fill="#f5a90e"/></svg><div style="position:absolute;left:1601.50px;width:400px;text-align:center;top:605.00px;font-size:23px;line-height:1;color:#fff;font-weight:400;white-space:nowrap;">5</div>
</body></html>
